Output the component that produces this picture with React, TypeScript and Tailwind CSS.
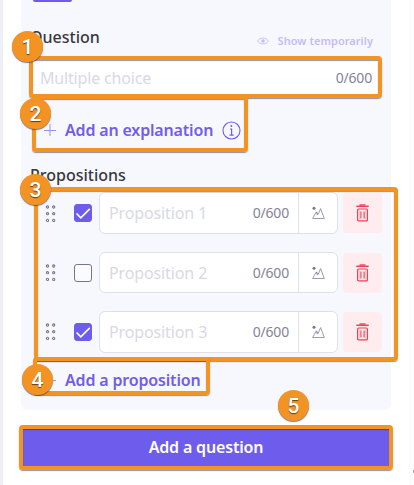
import React from "react";

const propositions = [
  { label: "Proposition 1", checked: true, row: "mt-[5px] h-[42px]", box: "", handle: "top-px" },
  { label: "Proposition 2", checked: false, row: "mt-[18px] h-[41px]", box: "top-[0.5px]", handle: "" },
  { label: "Proposition 3", checked: true, row: "mt-[18px] h-[42px]", box: "", handle: "" },
];

// Numbered callouts and the frames they point to
const frames = [
  "left-[29px] top-[56px] h-[42px] w-[353px]",
  "left-[32px] top-[95px] h-[57px] w-[216px]",
  "left-[34px] top-[187px] h-[174px] w-[364px]",
  "left-[33px] top-[357px] h-[38px] w-[177px]",
  "left-[19px] top-[425px] h-[45px] w-[374px]",
];

const badges = [
  "left-[12px] top-[31px]",
  "left-[20px] top-[98px]",
  "left-[20px] top-[174px]",
  "left-[22px] top-[364px]",
  "left-[278px] top-[390px]",
];

const PlusIcon = () => (
  <svg width="12" height="12" viewBox="0 0 12 12" fill="none" stroke="#9c8df3">
    <path d="M6 0v12M0 6.5h12" />
  </svg>
);

const DragHandle = () => (
  <svg width="11" height="18" viewBox="0 0 11 18" fill="none" stroke="#77758c" strokeWidth="1.1">
    {[2, 8.7, 15.4].map((y) => (
      <g key={y}>
        <circle cx="2.5" cy={y} r="1.1" />
        <circle cx="8.7" cy={y} r="1.1" />
      </g>
    ))}
  </svg>
);

const ImageIcon = () => (
  <svg width="13" height="14" viewBox="0 0 13 14" fill="none" stroke="#858398">
    <circle cx="2" cy="2.3" r="1.5" fill="#77758c" stroke="none" />
    <path d="M.6 12.5 4.3 5.9l1.9 2.3 2.4-5.6 3.7 9.9z" strokeWidth="0.8" />
    <path d="M4.3 5.9 5.2 8.8l1-.6" strokeWidth="0.8" />
  </svg>
);

const TrashIcon = () => (
  <svg width="13" height="18" viewBox="0 0 13 18" fill="none" stroke="#ee4056">
    <path d="M3.5 1h6" strokeWidth="1.4" />
    <path d="M.3 2.3h12.4" strokeWidth="1.5" />
    <rect x="1.6" y="5" width="9.8" height="11.9" rx="1" strokeWidth="1.2" />
    <path d="M4.9 7.5v7M8.1 7.5v7" strokeWidth="1.1" />
    <path d="M3.4 6v9.5M9.6 6v9.5" stroke="#f7a5b0" strokeWidth="0.6" />
  </svg>
);

const EyeIcon = () => (
  <svg width="12" height="8" viewBox="0 0 12 8" fill="none" stroke="#c5bbf8">
    <path d="M.5 4C3 .1 9 .1 11.5 4 9 7.9 3 7.9.5 4z" strokeWidth="0.9" />
    <circle cx="6" cy="4" r="1.8" fill="#c5bbf8" stroke="none" />
  </svg>
);

const InfoIcon = () => (
  <svg width="19" height="19" viewBox="0 0 19 19" fill="none" stroke="#725de9">
    <circle cx="9.5" cy="9.5" r="8.5" strokeWidth="1.1" />
    <path d="M8 8h1.6v6M7.5 14.2h4.2" strokeWidth="1.2" />
    <circle cx="9.3" cy="5" r="1" fill="#725de9" stroke="none" />
  </svg>
);

const App: React.FC = () => {
  return (
    <div className="relative h-[485px] w-[414px] overflow-hidden border-l-3 border-[#efeff7] bg-white font-['Noto_Sans',sans-serif] text-base leading-6 whitespace-nowrap text-[#38373f]">
      <main className="ml-[18px] w-[370px]">
        <section className="h-[410px] rounded-b-[6px] bg-[#f7f8fe] pl-[9px]">
          <div className="ml-[3px] h-[2px] w-[39px] rounded-b-full bg-[#6e5ced]" />

          {/* Question */}
          <div className="mt-[23px] flex h-6 items-center justify-between pr-[18px]">
            <h2 className="text-base font-medium">Question</h2>
            <div className="mt-[7px] flex items-center gap-[9px] text-[11px] font-semibold tracking-[0.04px] text-[#c5bbf8]">
              <EyeIcon />
              <span>Show temporarily</span>
            </div>
          </div>
          <div className="mt-[10px] flex h-[38px] w-[349px] items-center justify-between rounded-[5px] bg-white pr-[7px] pl-[10px]">
            <span className="tracking-[-0.17px] text-[#d8d9e4]">Multiple choice</span>
            <span className="text-[14px] tracking-[-0.2px] text-[#858398]">0/600</span>
          </div>
          <div className="mt-[21px] ml-[14px] flex h-6 items-center font-semibold tracking-[-0.17px] text-[#725de9]">
            <PlusIcon />
            <span className="ml-[9px]">Add an explanation</span>
            <span className="ml-[9px]">
              <InfoIcon />
            </span>
          </div>

          {/* Propositions */}
          <h2 className="mt-[21px] font-medium">Propositions</h2>
          <div>
            {propositions.map((item) => (
              <div key={item.label} className={`flex items-center pl-[15px] ${item.row}`}>
                <span className={`relative ${item.handle}`}>
                  <DragHandle />
                </span>
                <span className={`relative ml-[18px] ${item.box}`}>
                  <svg width="18" height="18" viewBox="0 0 18 18" fill="none">
                    <rect x=".5" y=".5" width="17" height="17" rx="2.5" fill={item.checked ? "#6e5ced" : "#fafaff"} stroke={item.checked ? "#6e5ced" : "#77758c"} />
                    {item.checked && <path d="m2.5 9.5 4.3 4.3L15.8 4.8" stroke="#fff" strokeWidth="1.7" />}
                  </svg>
                </span>
                <div className="ml-[7px] flex h-full w-[239px] items-center rounded-[6px] border border-[#dfe0e9] bg-white pl-[9px]">
                  <span className="tracking-[-0.12px] text-[#d8d9e4]">{item.label}</span>
                  <span className="mr-[9px] ml-auto text-[14px] tracking-[-0.2px] text-[#858398]">0/600</span>
                  <span className="flex h-full w-[39px] items-center justify-center border-l border-[#dfe0e9]">
                    <ImageIcon />
                  </span>
                </div>
                <div className="ml-[5px] flex h-10 w-[39px] items-center justify-center rounded-[4px] bg-[#feecee]">
                  <TrashIcon />
                </div>
              </div>
            ))}
          </div>
          <div className="mt-[15px] ml-[14px] flex h-6 items-center font-semibold tracking-[-0.17px] text-[#725de9]">
            <PlusIcon />
            <span className="ml-[9px]">Add a proposition</span>
          </div>
        </section>

        <button className="mt-[18px] h-[39px] w-full bg-[#6e5ced] pb-px font-semibold tracking-[-0.17px] text-white">Add a question</button>
      </main>

      <div className="absolute inset-y-0 right-0 w-[5px] bg-[#fcfcfd]" />
      <div className="absolute right-0 bottom-[12px] h-[3px] w-px bg-[#aaaab0]" />

      <div className="absolute inset-y-0 -left-[3px] w-[414px]">
        {frames.map((place) => (
          <div key={place} className={`absolute rounded-[4px] border-4 border-[#f39323] shadow-[0_1px_1px_rgba(40,40,70,0.5),inset_0_1px_1px_rgba(40,40,70,0.5)] ${place}`} />
        ))}
        {badges.map((place, i) => (
          <div key={place} className={`absolute flex size-[31px] items-center justify-center rounded-full bg-[#f39323] font-['Roboto',sans-serif] text-[21px] font-medium text-white shadow-[0_1px_1px_rgba(40,40,70,0.6)] [text-shadow:0_1px_1px_rgba(60,40,20,0.8)] ${place}`}>
            {i + 1}
          </div>
        ))}
      </div>
    </div>
  );
};

export default App;
